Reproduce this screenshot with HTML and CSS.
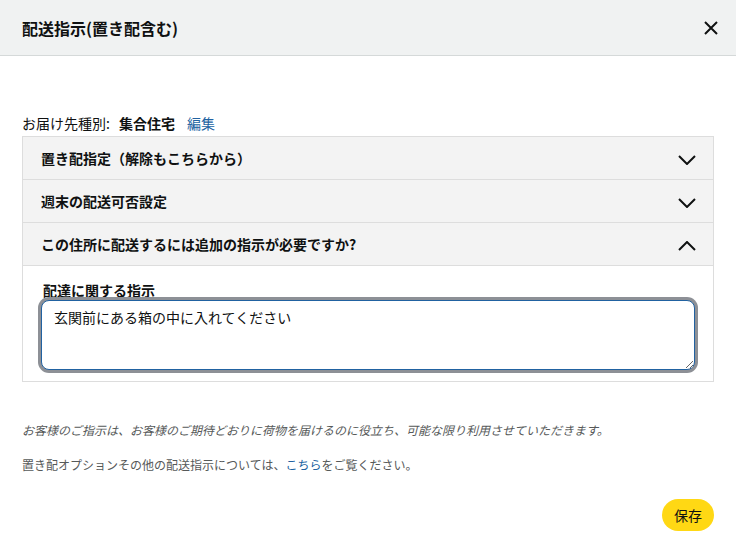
FILE: index.html
```html
<!DOCTYPE html>
<html lang="ja">
<head>
    <meta charset="UTF-8">
    <meta name="viewport" content="width=device-width, initial-scale=1.0">
    <title>配送指示</title>
    <link rel="stylesheet" href="styles.css">
</head>
<body>
    <div class="modal">
        <div class="modal-header">
            <h2 class="modal-title">配送指示(置き配含む)</h2>
            <button class="close-button" aria-label="閉じる">
                <svg width="14" height="14" viewBox="0 0 14 14"><path d="M1 1 L13 13 M13 1 L1 13" stroke="#0f1111" stroke-width="2" fill="none"/></svg>
            </button>
        </div>

        <div class="modal-body">
            <div class="address-type">
                お届け先種別: <strong class="address-value">集合住宅</strong><a href="#" class="link">編集</a>
            </div>

            <div class="accordion">
                <div class="accordion-row">
                    <span class="row-title">置き配指定（解除もこちらから）</span>
                    <svg class="chevron" width="18" height="10" viewBox="0 0 18 10"><path d="M1 1 L9 9 L17 1" stroke="#0f1111" stroke-width="2" fill="none"/></svg>
                </div>
                <div class="accordion-row">
                    <span class="row-title">週末の配送可否設定</span>
                    <svg class="chevron" width="18" height="10" viewBox="0 0 18 10"><path d="M1 1 L9 9 L17 1" stroke="#0f1111" stroke-width="2" fill="none"/></svg>
                </div>
                <div class="accordion-row">
                    <span class="row-title">この住所に配送するには追加の指示が必要ですか?</span>
                    <svg class="chevron" width="18" height="10" viewBox="0 0 18 10"><path d="M1 9 L9 1 L17 9" stroke="#0f1111" stroke-width="2" fill="none"/></svg>
                </div>
                <div class="accordion-content">
                    <label class="field-label" for="instructions">配達に関する指示</label>
                    <textarea id="instructions" class="instructions">玄関前にある箱の中に入れてください</textarea>
                </div>
            </div>

            <p class="note">お客様のご指示は、お客様のご期待どおりに荷物を届けるのに役立ち、可能な限り利用させていただきます。</p>
            <p class="info">置き配オプションその他の配送指示については、<a href="#" class="link">こちら</a>をご覧ください。</p>

            <div class="actions">
                <button class="save-button">保存</button>
            </div>
        </div>
    </div>
</body>
</html>
```

FILE: styles.css
```css
body {
    margin: 0;
    font-family: "Noto Sans CJK JP", "Noto Sans", sans-serif;
    color: #0f1111;
    background: #fff;
    font-size: 14px;
    line-height: 20px;
}

.modal {
    width: 736px;
    height: 554px;
}

.modal-header {
    display: flex;
    align-items: center;
    justify-content: space-between;
    height: 56px;
    padding: 0 18px 0 22px;
    background: #f0f2f2;
    border-bottom: 1px solid #d5d9d9;
    box-sizing: border-box;
}

.modal-title {
    margin: 0;
    font-size: 16px;
    font-weight: bold;
    line-height: 24px;
}

.close-button {
    display: flex;
    background: none;
    border: none;
    padding: 0;
    cursor: pointer;
}

.modal-body {
    padding: 57px 22px 0 22px;
}

.address-type {
    margin-bottom: 3px;
}

.address-value {
    margin-left: 6px;
    margin-right: 12px;
}

.link {
    color: #2162a1;
    text-decoration: none;
}

.accordion {
    border: 1px solid #ddd;
}

.accordion-row {
    display: flex;
    align-items: center;
    justify-content: space-between;
    height: 42px;
    padding: 0 17px 0 18px;
    background: #f3f3f3;
    border-bottom: 1px solid #ddd;
}

.row-title {
    font-weight: bold;
}

.chevron {
    margin-top: 3px;
}

.accordion-content {
    display: flex;
    flex-direction: column;
    padding: 14px 18px 11px 18px;
}

.field-label {
    font-weight: bold;
    margin-left: 2px;
}

.instructions {
    height: 70px;
    box-sizing: border-box;
    padding: 6px 12px;
    font-family: "Noto Sans CJK JP", "Noto Sans", sans-serif;
    font-size: 14px;
    line-height: 20px;
    color: #0f1111;
    border: 1px solid #2162a1;
    border-radius: 8px;
    box-shadow: 0 0 0 3px #8d9096;
    outline: none;
    resize: vertical;
}

.note {
    margin: 38px 0 0 0;
    font-size: 12px;
    font-style: italic;
    color: #565959;
}

.info {
    margin: 15px 0 0 0;
    font-size: 12px;
    color: #565959;
}

.actions {
    display: flex;
    justify-content: flex-end;
    margin-top: 24px;
}

.save-button {
    height: 32px;
    padding: 0 12px;
    background: #ffd814;
    border: none;
    border-radius: 16px;
    font-family: "Noto Sans CJK JP", "Noto Sans", sans-serif;
    font-size: 14px;
    color: #0f1111;
    cursor: pointer;
}
```
